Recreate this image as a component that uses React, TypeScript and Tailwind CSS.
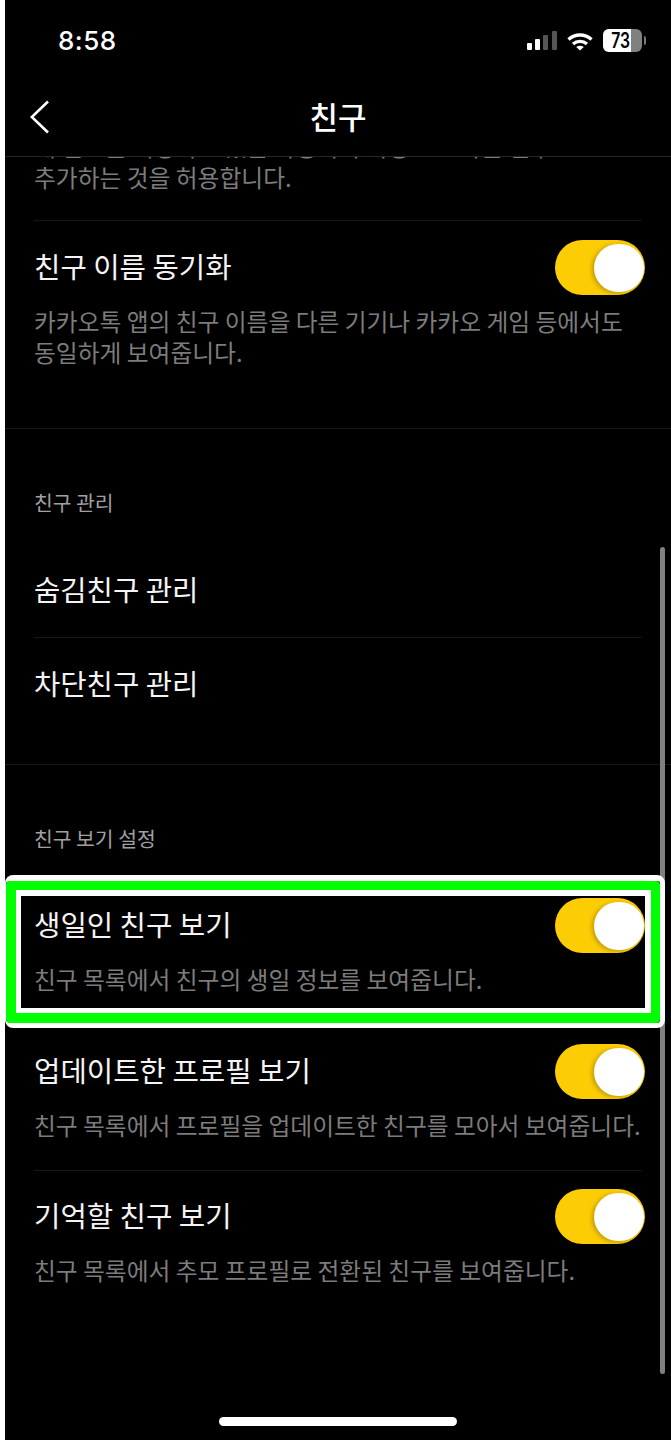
const FONT = "font-['Noto_Sans_CJK_KR','Noto_Sans',sans-serif]";

function Toggle() {
  return (
    <div className="flex h-[55px] w-[90px] shrink-0 items-center justify-end rounded-full bg-[#fccc04] pr-[1px]">
      <div className="h-[48px] w-[50px] rounded-full bg-white shadow-[-2px_1px_4px_rgba(0,0,0,0.25)]" />
    </div>
  );
}

function ToggleRow({ title, desc, className }: { title: string; desc: string; className: string }) {
  return (
    <div className={className}>
      <div className="flex items-start justify-between">
        <div className="pt-[3px] text-[28.7px] leading-[46px] text-[#f4f4f4]">{title}</div>
        <Toggle />
      </div>
      <div className="whitespace-pre pt-[10px] text-[23.75px] leading-[31px] text-[#7c7c7c]">{desc}</div>
    </div>
  );
}

export default function App() {
  return (
    <div className={`h-[1440px] w-[671px] overflow-hidden bg-white pl-[5px] ${FONT}`}>
      <div className="relative flex h-[1440px] flex-col bg-black">
        {/* status bar */}
        <div className="flex h-[84px] shrink-0 items-start justify-between pl-[53px] pr-[25px] pt-[23px]">
          <div className="font-['Inter',sans-serif] text-[26px] font-medium leading-[36px] tracking-[0.5px] text-white">8:58</div>
          <div className="flex items-start pt-[6px]">
            <svg width="30" height="20" viewBox="0 0 30 20" className="mr-[10px] mt-[2px]">
              <rect x="0" y="12" width="5" height="7" rx="1" fill="#fff" />
              <rect x="8" y="8" width="5" height="11" rx="1" fill="#fff" />
              <rect x="16" y="4" width="5" height="15" rx="1" fill="#555" />
              <rect x="25" y="0" width="5" height="19" rx="1" fill="#555" />
            </svg>
            <svg width="26" height="18" viewBox="0 0 26 18" className="mr-[10px] mt-[4px]" fill="none" stroke="#fff" strokeWidth="3.4">
              <path d="M1.5 6.5C8 0.5 18 0.5 24.5 6.5" />
              <path d="M6 11C10 7.5 16 7.5 20 11" />
              <path d="M13 17.5L9.2 13.9C11.4 12.2 14.6 12.2 16.8 13.9Z" fill="#fff" stroke="none" />
            </svg>
            <div className="flex items-center">
              <div className="flex h-[23px] w-[39px] overflow-hidden rounded-[6px] bg-[#808080]">
                <div className="flex w-[28px] justify-center bg-white pl-[7px]">
                  <span className="scale-x-75 font-['Inter',sans-serif] text-[21px] font-semibold leading-[23px] text-black">73</span>
                </div>
              </div>
              <div className="ml-[2px] h-[9px] w-[2px] rounded-r-full bg-[#777]" />
            </div>
          </div>
        </div>

        {/* nav */}
        <div className="relative flex h-[73px] shrink-0 items-center justify-center border-b border-[#262626] pb-[8px]">
          <svg width="20" height="34" viewBox="0 0 20 34" fill="none" stroke="#fff" strokeWidth="2.6" className="absolute left-[25px] top-[16px]">
            <path d="M18 1.5L1.8 17L18 32.5" />
          </svg>
          <div className="text-[31px] font-medium leading-[40px] text-white">친구</div>
        </div>

        {/* settings list */}
        <div className="relative flex-1 overflow-hidden">
          <div className="mt-[-27px] pl-[29px] text-[23.75px] leading-[31px] text-[#7c7c7c]">
            <div className="whitespace-nowrap">내 번호를 저장하고 있는 사용자가 자동으로 나를 친구로</div>
            <div>추가하는 것을 허용합니다.</div>
          </div>
          <div className="mx-[29px] mt-[28px] border-t border-[#161616]" />
          <ToggleRow
            className="pb-[61px] pl-[29px] pr-[26px] pt-[19px]"
            title="친구 이름 동기화"
            desc={"카카오톡 앱의 친구 이름을 다른 기기나 카카오 게임 등에서도\n동일하게 보여줍니다."}
          />
          <div className="border-t border-[#161616]" />

          <div className="px-[29px] pt-[58px] text-[20.4px] leading-[30px] text-[#a0a0a0]">친구 관리</div>
          <div className="px-[29px] pt-[49px]">
            <div className="pb-[25px] text-[28.6px] leading-[46px] text-[#f4f4f4]">숨김친구 관리</div>
            <div className="border-t border-[#161616]" />
            <div className="pb-[58px] pt-[22px] text-[28.6px] leading-[46px] text-[#f4f4f4]">차단친구 관리</div>
          </div>
          <div className="border-t border-[#161616]" />

          <div className="px-[29px] pt-[58px] text-[20.4px] leading-[30px] text-[#a0a0a0]">친구 보기 설정</div>
          <ToggleRow
            className="pl-[29px] pr-[26px] pt-[45px]"
            title="생일인 친구 보기"
            desc="친구 목록에서 친구의 생일 정보를 보여줍니다."
          />
          <ToggleRow
            className="pl-[29px] pr-[26px] pt-[50px]"
            title="업데이트한 프로필 보기"
            desc="친구 목록에서 프로필을 업데이트한 친구를 모아서 보여줍니다."
          />
          <div className="mx-[29px] mt-[30px] border-t border-[#161616]" />
          <ToggleRow
            className="pl-[29px] pr-[26px] pt-[18px]"
            title="기억할 친구 보기"
            desc="친구 목록에서 추모 프로필로 전환된 친구를 보여줍니다."
          />
        </div>

        {/* scrollbar */}
        <div className="absolute left-[655px] top-[547px] h-[827px] w-[5px] rounded-full bg-[#808080]" />

        {/* home indicator */}
        <div className="absolute left-[214px] top-[1417px] h-[9px] w-[238px] rounded-full bg-white" />

        {/* highlight annotation */}
        <div className="pointer-events-none absolute left-0 top-[875px] h-[153px] w-[660px] rounded-[8px] border-[5px] border-l-[1px] border-t-[6px] border-white">
          <div className="h-full w-full rounded-[4px] border-[10px] border-r-[9px] border-t-[9px] border-[#00ff00]">
            <div className="h-full w-full border-[5px] border-r-[6px] border-t-[6px] border-white" />
          </div>
        </div>
      </div>
    </div>
  );
}
